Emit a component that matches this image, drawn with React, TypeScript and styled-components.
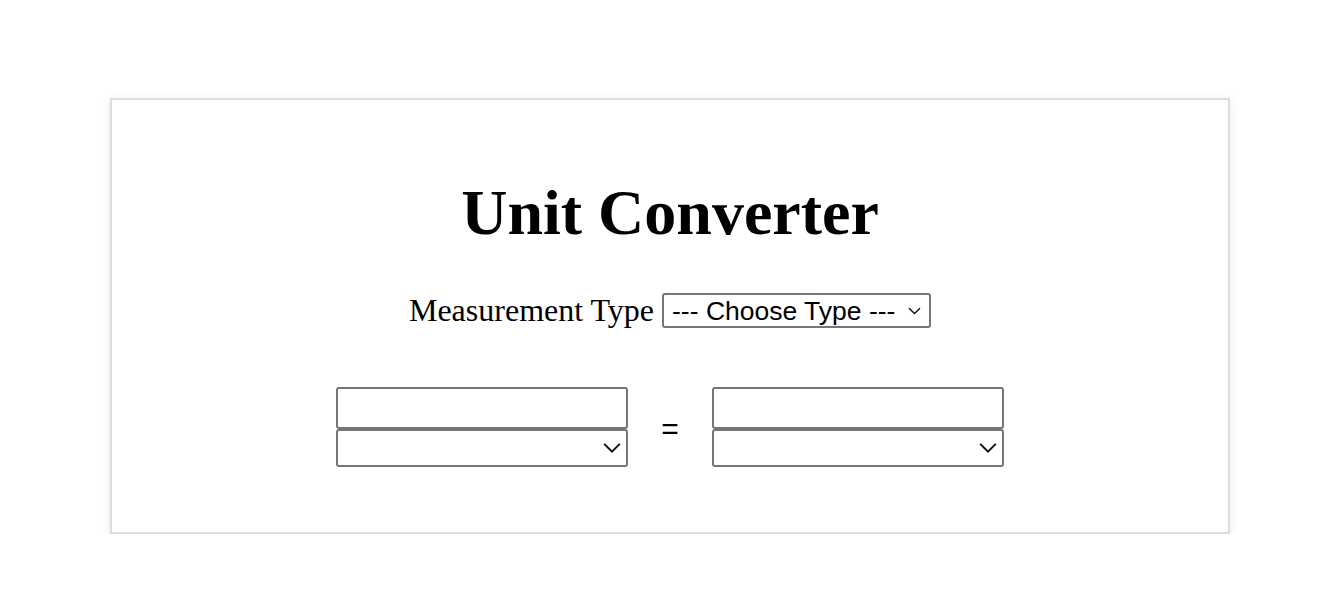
import React from "react";
import styled, { createGlobalStyle } from "styled-components";

const GlobalStyle = createGlobalStyle`
  html, body {
    margin: 0;
    padding: 0;
    background: #ffffff;
  }
  body {
    font-family: "Liberation Serif", "Times New Roman", serif;
    color: #000;
  }
`;

const Page = styled.div`
  display: flex;
  justify-content: center;
  padding-top: 98px;
  padding-left: 110px;
  padding-right: 114px;
`;

const Card = styled.section`
  box-sizing: border-box;
  width: 1120px;
  height: 436px;
  border: 2px solid #dddddd;
  box-shadow: 0 3px 10px rgba(0, 0, 0, 0.09);
  background: #fff;
  padding-top: 76px;
  display: flex;
  flex-direction: column;
  align-items: center;
`;

const Title = styled.h1`
  margin: 0;
  font-size: 64px;
  line-height: 74px;
  font-weight: bold;
  text-align: center;
`;

const TypeRow = styled.div`
  margin-top: 42px;
  display: flex;
  align-items: center;
  gap: 8px;
`;

const Label = styled.label`
  font-size: 32px;
  line-height: 37px;
`;

const SelectWrap = styled.div<{ $w: number; $h: number }>`
  position: relative;
  width: ${(p) => p.$w}px;
  height: ${(p) => p.$h}px;
`;

const Select = styled.select<{ $fs: number }>`
  appearance: none;
  -webkit-appearance: none;
  box-sizing: border-box;
  width: 100%;
  height: 100%;
  margin: 0;
  border: 2px solid #767676;
  border-radius: 3px;
  background: #fff;
  color: #000;
  font-family: "Liberation Sans", Arial, sans-serif;
  font-size: ${(p) => p.$fs}px;
  padding: 0 0 0 8px;
  outline: none;
`;

const Chevron = styled.svg<{ $right: number }>`
  position: absolute;
  right: ${(p) => p.$right}px;
  top: 50%;
  transform: translateY(-50%);
  pointer-events: none;
`;

const ConvertRow = styled.div`
  margin-top: 58px;
  display: flex;
  align-items: center;
`;

const Column = styled.div`
  display: flex;
  flex-direction: column;
  width: 292px;
`;

const ValueInput = styled.input`
  box-sizing: border-box;
  width: 100%;
  height: 42px;
  margin: 0;
  border: 2px solid #767676;
  border-radius: 3px;
  background: #fff;
  font-family: "Liberation Sans", Arial, sans-serif;
  font-size: 24px;
  padding: 0 6px;
  outline: none;
`;

const Equals = styled.span`
  width: 84px;
  text-align: center;
  font-family: "Liberation Sans", Arial, sans-serif;
  font-size: 30px;
  line-height: 34px;
  padding-top: 4px;
`;

function UnitSelect({ w, h, fs, big }: { w: number; h: number; fs: number; big?: boolean }) {
  return (
    <SelectWrap $w={w} $h={h}>
      <Select $fs={fs} defaultValue="">
        {big ? <option value="">--- Choose Type ---</option> : <option value=""></option>}
      </Select>
      {big ? (
        <Chevron $right={10} width="13" height="8" viewBox="0 0 13 8">
          <path d="M1 1.2 L6.5 6.6 L12 1.2" fill="none" stroke="#111" strokeWidth="1.4" />
        </Chevron>
      ) : (
        <Chevron $right={7} width="18" height="11" viewBox="0 0 18 11">
          <path d="M1.2 1.4 L9 9.2 L16.8 1.4" fill="none" stroke="#111" strokeWidth="2" />
        </Chevron>
      )}
    </SelectWrap>
  );
}

export default function App() {
  return (
    <>
      <GlobalStyle />
      <Page>
        <Card>
          <Title>Unit Converter</Title>
          <TypeRow>
            <Label>Measurement Type</Label>
            <UnitSelect w={269} h={35} fs={26.5} big />
          </TypeRow>
          <ConvertRow>
            <Column>
              <ValueInput type="text" />
              <UnitSelect w={292} h={38} fs={24} />
            </Column>
            <Equals>=</Equals>
            <Column>
              <ValueInput type="text" />
              <UnitSelect w={292} h={38} fs={24} />
            </Column>
          </ConvertRow>
        </Card>
      </Page>
    </>
  );
}
